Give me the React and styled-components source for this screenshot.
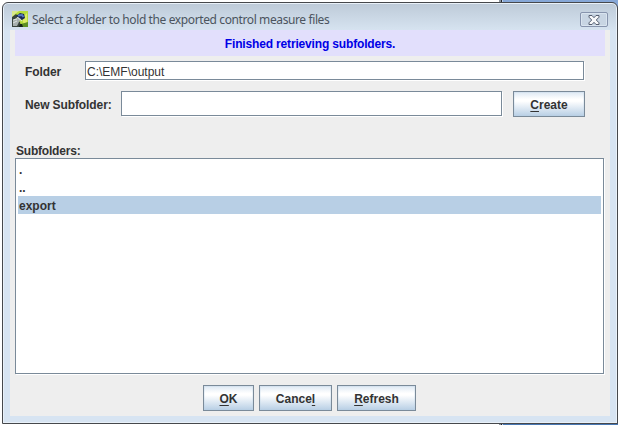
import React from "react";
import styled, { createGlobalStyle } from "styled-components";

const GlobalStyle = createGlobalStyle`
  * { box-sizing: border-box; }
  body { margin: 0; overflow: hidden; background: #fff; }
`;

const Desktop = styled.div`
  width: 618px;
  height: 425px;
  padding: 2px 0 1px 2px;
  background:
    linear-gradient(90deg, #fff 0 499px, #8a929b 499px 501px, #20242c 501px 502px, #bed0e8 502px 503px, #86a7d7 503px) 0 0 / 618px 8px no-repeat,
    linear-gradient(90deg, #fff 0 499px, #8a929b 499px 501px, #20242c 501px 502px, #bed0e8 502px 503px, #4878b4 503px) 0 417px / 618px 8px no-repeat,
    #fff;
  font: bold 12px/14px "Liberation Sans", Arial, sans-serif;
  color: #333;
`;

const Window = styled.div`
  height: 422px;
  display: flex;
  flex-direction: column;
  padding: 0 6px 7px;
  border: 1px solid #46484c;
  border-radius: 6px 6px 0 0;
  box-shadow: inset 0 0 0 1px #e9f1f9;
  background: linear-gradient(#bdcad8 0, #d6e3f0 27px, #d7e4f2 28px);
`;

const TitleBar = styled.header`
  flex: 0 0 27px;
  display: flex;
  align-items: center;
  padding: 5px 3px 0 3px;
`;

const Title = styled.span`
  flex: 1;
  margin-left: 4px;
  padding-top: 1px;
  font: 12px/16px "Noto Sans", "Open Sans", sans-serif;
  letter-spacing: ${(p) => p.$tracking}px;
  white-space: nowrap;
  color: #4b545e;
`;

const CloseButton = styled.button`
  display: flex;
  align-items: center;
  justify-content: center;
  width: 28px;
  height: 15px;
  margin-top: 1px;
  padding: 0;
  border: 1px solid #8794ad;
  border-radius: 2px;
  background: #c8d5e3;
  box-shadow: inset 0 0 0 1px #d9e4ef;
`;

const Content = styled.main`
  flex: 1;
  margin: 0 0 0 1px;
  width: 600px;
  padding: 0 5px;
  background: #eee;
`;

const Status = styled.div`
  height: 26px;
  line-height: 28px;
  text-align: center;
  background: #e2dffc;
  color: #0000e6;
  letter-spacing: -0.16px;
`;

const FormRow = styled.div`
  display: flex;
  align-items: flex-start;
  height: ${(p) => p.$height}px;
  margin-top: ${(p) => p.$gap}px;
  padding-left: 10px;
`;

const Label = styled.label`
  width: ${(p) => p.$width}px;
  line-height: ${(p) => p.$line}px;
  letter-spacing: -0.1px;
  white-space: nowrap;
`;

const TextInput = styled.input`
  width: ${(p) => p.$width}px;
  height: ${(p) => p.$height}px;
  padding: 2px 1px 0;
  border: 1px solid #7a8a99;
  border-radius: 0;
  outline: 0;
  box-shadow: 1px 1px 0 #fff;
  background: #fff;
  color: #333;
  font: 12px/15px "Liberation Sans", Arial, sans-serif;
`;

const Button = styled.button`
  width: ${(p) => p.$width}px;
  height: 26px;
  padding: 1px 0 0;
  border: 1px solid #7a8a99;
  background: linear-gradient(#dde8f3 0, #fff 30%, #fff 38%, #b8cfe5 100%);
  box-shadow: inset 0 0 0 1px rgba(184, 207, 229, 0.25);
  font: inherit;
  color: #333;
  u { text-underline-offset: 2px; text-decoration-thickness: 1px; text-decoration-skip-ink: none; }
`;

const InlineButton = styled(Button)`
  margin-left: 11px;
`;

const ListTitle = styled.div`
  margin-top: 27px;
  padding-left: 1px;
  letter-spacing: -0.2px;
`;

const List = styled.ul`
  list-style: none;
  width: 589px;
  height: 216px;
  margin: 0;
  padding: 1px 2px;
  border: 1px solid #7a8a99;
  box-shadow: 1px 1px 0 #fff;
  background: #fff;
`;

const ListItem = styled.li`
  height: 18px;
  padding-left: 1px;
  line-height: 20px;
  background: ${(p) => (p.$selected ? "#b8cfe5" : "transparent")};
`;

const Actions = styled.footer`
  display: flex;
  gap: 5px;
  margin: 11px 0 0 188px;
`;

function AppIcon() {
  return (
    <svg width="16" height="16" viewBox="0 0 16 16">
      <rect width="16" height="16" fill="#b5dc3c" />
      <path d="M0 0h7L3 3 0 7z" fill="#d9e88c" />
      <path d="M10 7l5-5v9l-3 3z" fill="#dcec68" />
      <path d="M0 6l4-3 2 2-2 3 4 3 1 5H0z" fill="#39443c" />
      <path d="M9 13l7-2v5H8z" fill="#5c8f22" />
      <path d="M4 5l4-3 4 1 1 4-3 2-4-2z" fill="#182854" />
      <path d="M6 4.5l4-.5 1.5 2" stroke="#5579c4" strokeWidth="2" fill="none" />
      <path d="M1 15l0-6 5-3 3 2-2 3-2 4z" fill="#a6afad" />
      <path d="M1 9l4-1M1 12l4-2M5 6l5 4" stroke="#e3e8e5" strokeWidth=".9" />
      <path d="M8 13l2 0 1 3H7z" fill="#14251a" />
    </svg>
  );
}

function CloseIcon() {
  return (
    <svg width="12" height="10" viewBox="0 0 12 10">
      <path d="M1 .5h3L6 2.7 8 .5h3v1.7L8.3 5 11 7.8v1.7H8L6 7.3 4 9.5H1V7.8L3.7 5 1 2.2z" fill="#f7f8fa" stroke="#555e70" strokeWidth="1" />
    </svg>
  );
}

export default function App() {
  return (
    <Desktop>
      <GlobalStyle />
      <Window>
        <TitleBar>
          <AppIcon />
          <Title $tracking={-0.39}>Select a folder to hold the exported control measure files</Title>
          <CloseButton aria-label="Close"><CloseIcon /></CloseButton>
        </TitleBar>
        <Content>
          <Status>Finished retrieving subfolders.</Status>
          <FormRow $height={19} $gap={5}>
            <Label $width={60} $line={22} htmlFor="folder">Folder</Label>
            <TextInput id="folder" $width={499} $height={19} defaultValue="C:\EMF\output" />
          </FormRow>
          <FormRow $height={26} $gap={11}>
            <Label $width={96} $line={28} htmlFor="subfolder">New Subfolder:</Label>
            <TextInput id="subfolder" $width={381} $height={25} />
            <InlineButton $width={72}><u>C</u>reate</InlineButton>
          </FormRow>
          <ListTitle>Subfolders:</ListTitle>
          <List>
            <ListItem>.</ListItem>
            <ListItem>..</ListItem>
            <ListItem $selected>export</ListItem>
          </List>
          <Actions>
            <Button $width={51}><u>O</u>K</Button>
            <Button $width={73}>Cance<u>l</u></Button>
            <Button $width={79}><u>R</u>efresh</Button>
          </Actions>
        </Content>
      </Window>
    </Desktop>
  );
}
